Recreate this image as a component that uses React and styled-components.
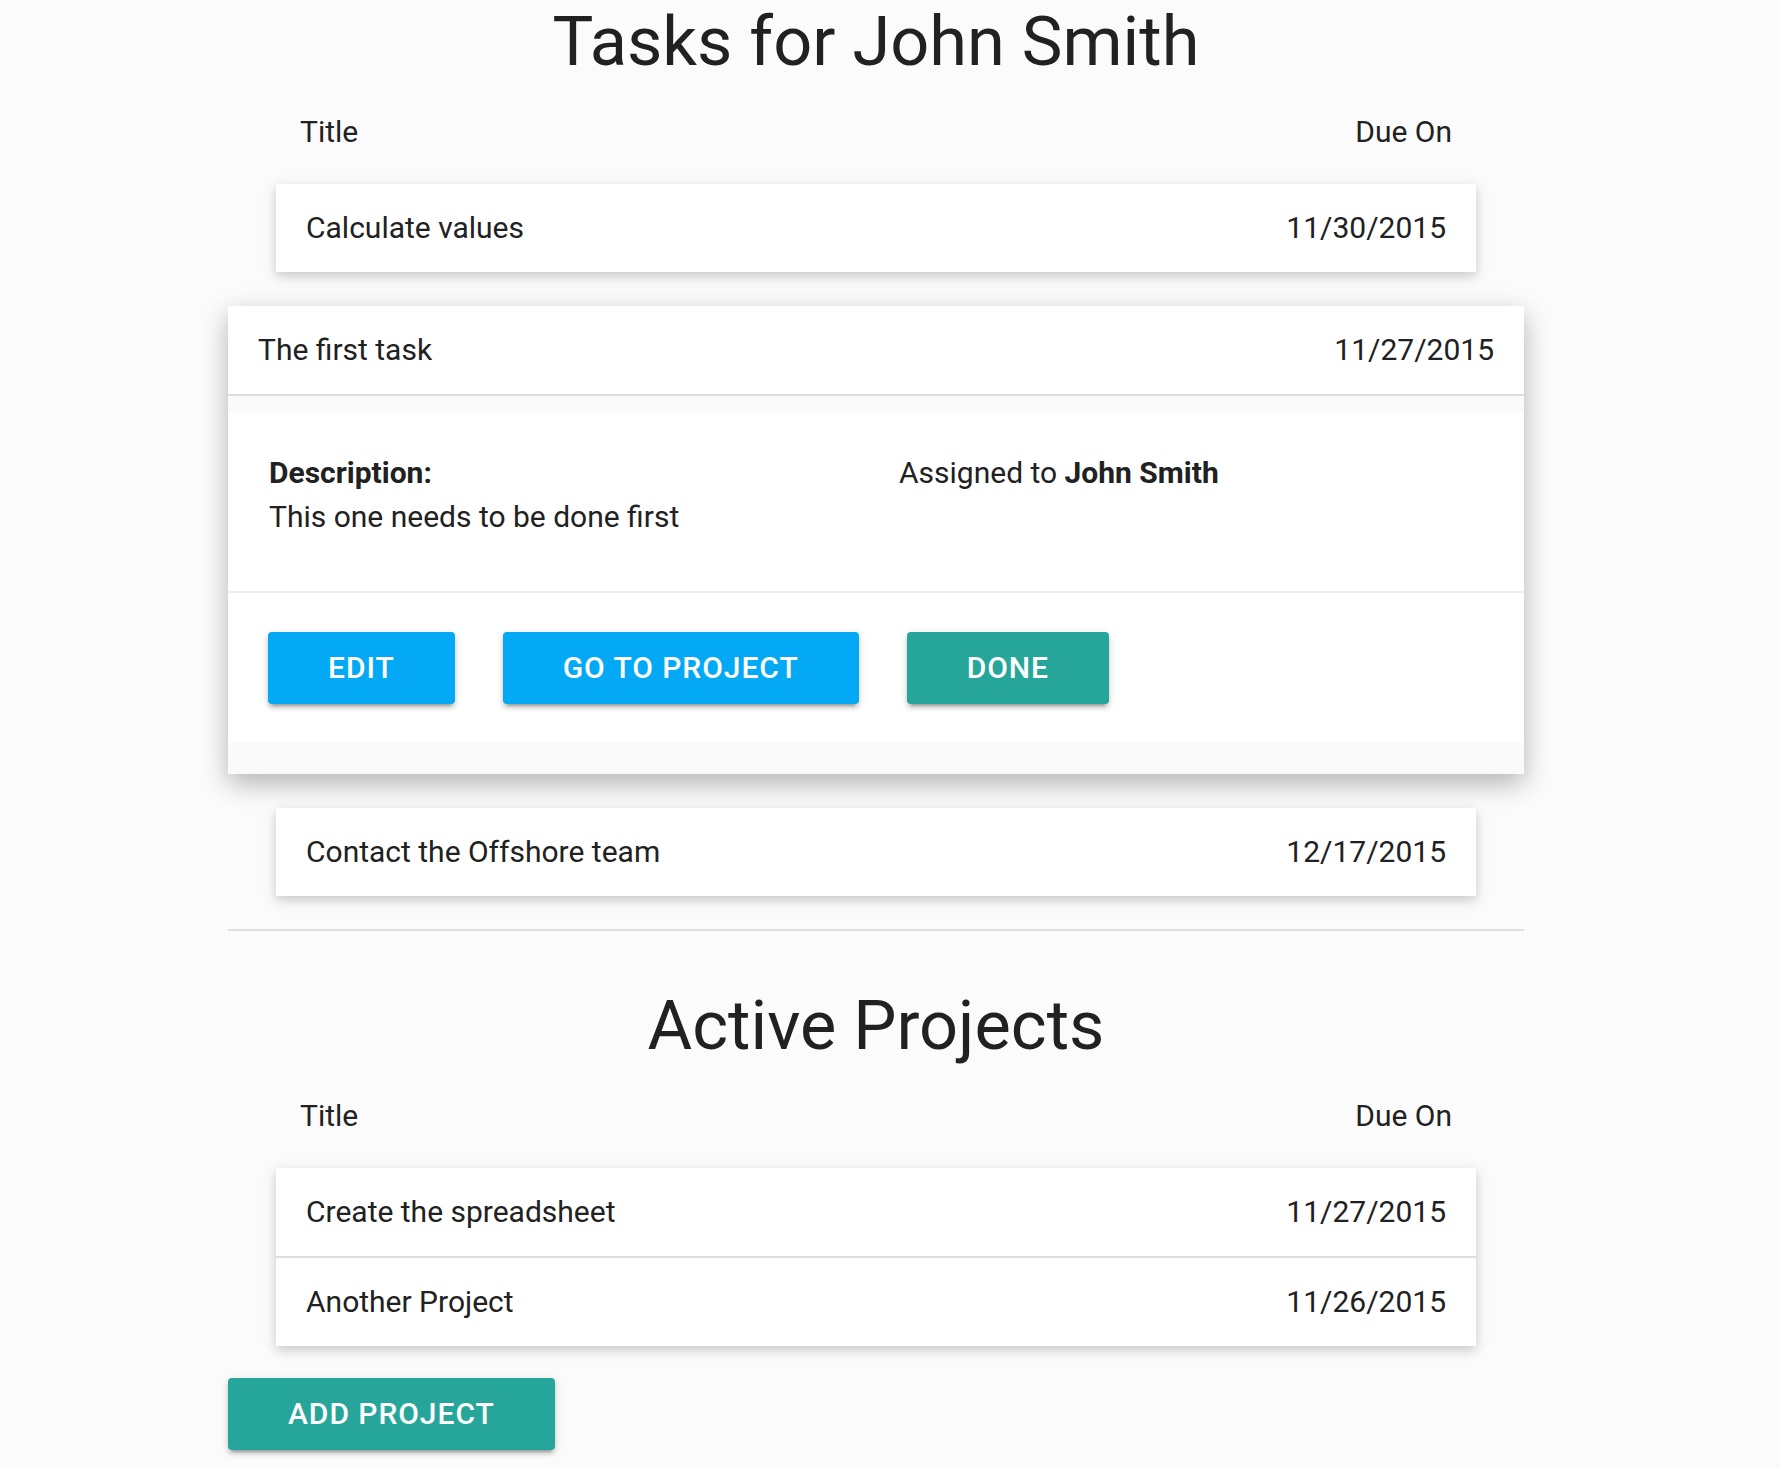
import React from "react";
import styled, { createGlobalStyle } from "styled-components";

const GlobalStyle = createGlobalStyle`
  html, body { margin: 0; padding: 0; }
  body {
    background: #fbfbfb;
    font-family: Roboto, "Liberation Sans", sans-serif;
    color: #212121;
    -webkit-font-smoothing: antialiased;
  }
  * { box-sizing: border-box; }
`;

const Page = styled.div`
  padding: 0 256px 20px 228px;
`;

const Container = styled.main`
  display: flex;
  flex-direction: column;
`;

const Heading = styled.h1`
  margin: 0;
  padding-top: 3px;
  font-size: 68.5px;
  font-weight: 400;
  line-height: 78px;
  text-align: center;
  color: #212121;
`;

const ColumnHeader = styled.div`
  display: flex;
  justify-content: space-between;
  padding: 28px 24px 30px;
  margin: 0 48px;
  font-size: 30px;
  line-height: 45px;
`;

const Collapsible = styled.ul`
  list-style: none;
  margin: 0;
  padding: 0;
  display: flex;
  flex-direction: column;
`;

const Item = styled.li`
  background: #fff;
  margin: ${(p) => (p.$active ? "34px 0" : "0 48px")};
  box-shadow: ${(p) =>
    p.$active
      ? "0 10px 22px 0 rgba(0,0,0,0.18), 0 8px 30px 0 rgba(0,0,0,0.12)"
      : "0 4px 10px 0 rgba(0,0,0,0.14), 0 4px 16px 0 rgba(0,0,0,0.08)"};
`;

const ItemHeader = styled.div`
  display: flex;
  align-items: center;
  justify-content: space-between;
  height: 86px;
  padding: 0 30px 2px;
  font-size: 30px;
  background: #fff;
  border-bottom: ${(p) => (p.$divided ? "2px solid #dddddd" : "none")};
  box-sizing: content-box;
`;

const ItemBody = styled.div`
  background: #fafafa;
  padding: 16px 0 31px;
`;

const Details = styled.div`
  display: grid;
  grid-template-columns: 1fr 1fr;
  background: #fff;
  padding: 39px 18px 52px;
  border-bottom: 2px solid #eeeeee;
  font-size: 30px;
  line-height: 44px;
`;

const DetailColumn = styled.div`
  padding: 0 23px;
`;

const Strong = styled.strong`
  font-weight: 700;
`;

const Actions = styled.div`
  display: flex;
  gap: 48px;
  background: #fff;
  padding: 39px 40px;
`;

const Button = styled.button`
  height: 72px;
  padding: 0 60px;
  border: none;
  border-radius: 4px;
  background: ${(p) => (p.$tone === "teal" ? "#26a69a" : "#03a9f4")};
  color: #fff;
  font-family: Roboto, "Liberation Sans", sans-serif;
  font-size: 30px;
  font-weight: 500;
  letter-spacing: 0.95px;
  line-height: 72px;
  text-transform: uppercase;
  box-shadow: 0 4px 4px 0 rgba(0,0,0,0.14), 0 2px 10px 0 rgba(0,0,0,0.12), 0 6px 2px -4px rgba(0,0,0,0.2);
  cursor: pointer;
  align-self: flex-start;
`;

const Divider = styled.hr`
  margin: 33px 0 53px;
  border: none;
  border-top: 2px solid #e0e0e0;
  height: 0;
`;

const List = styled.ul`
  list-style: none;
  margin: 0 48px;
  padding: 0;
  background: #fff;
  box-shadow: 0 4px 10px 0 rgba(0,0,0,0.14), 0 4px 16px 0 rgba(0,0,0,0.08);
`;

const Row = styled.li`
  display: flex;
  align-items: center;
  justify-content: space-between;
  height: 86px;
  padding: 0 30px 2px;
  font-size: 30px;
  border-top: ${(p) => (p.$first ? "none" : "2px solid #dddddd")};
  box-sizing: content-box;
`;

const AddWrap = styled.div`
  margin-top: 32px;
  display: flex;
`;

const tasks = [
  { title: "Calculate values", due: "11/30/2015" },
  { title: "The first task", due: "11/27/2015", active: true },
  { title: "Contact the Offshore team", due: "12/17/2015" },
];

const projects = [
  { title: "Create the spreadsheet", due: "11/27/2015" },
  { title: "Another Project", due: "11/26/2015" },
];

export default function App() {
  return (
    <>
      <GlobalStyle />
      <Page>
        <Container>
          <Heading>Tasks for John Smith</Heading>
          <ColumnHeader>
            <span>Title</span>
            <span>Due On</span>
          </ColumnHeader>
          <Collapsible>
            {tasks.map((t) => (
              <Item key={t.title} $active={t.active}>
                <ItemHeader $divided={t.active}>
                  <span>{t.title}</span>
                  <span>{t.due}</span>
                </ItemHeader>
                {t.active && (
                  <ItemBody>
                    <Details>
                      <DetailColumn>
                        <Strong>Description:</Strong>
                        <div>This one needs to be done first</div>
                      </DetailColumn>
                      <DetailColumn>
                        Assigned to <Strong>John Smith</Strong>
                      </DetailColumn>
                    </Details>
                    <Actions>
                      <Button>Edit</Button>
                      <Button>Go to project</Button>
                      <Button $tone="teal">Done</Button>
                    </Actions>
                  </ItemBody>
                )}
              </Item>
            ))}
          </Collapsible>
          <Divider />
          <Heading>Active Projects</Heading>
          <ColumnHeader>
            <span>Title</span>
            <span>Due On</span>
          </ColumnHeader>
          <List>
            {projects.map((p, i) => (
              <Row key={p.title} $first={i === 0}>
                <span>{p.title}</span>
                <span>{p.due}</span>
              </Row>
            ))}
          </List>
          <AddWrap>
            <Button $tone="teal">Add project</Button>
          </AddWrap>
        </Container>
      </Page>
    </>
  );
}
